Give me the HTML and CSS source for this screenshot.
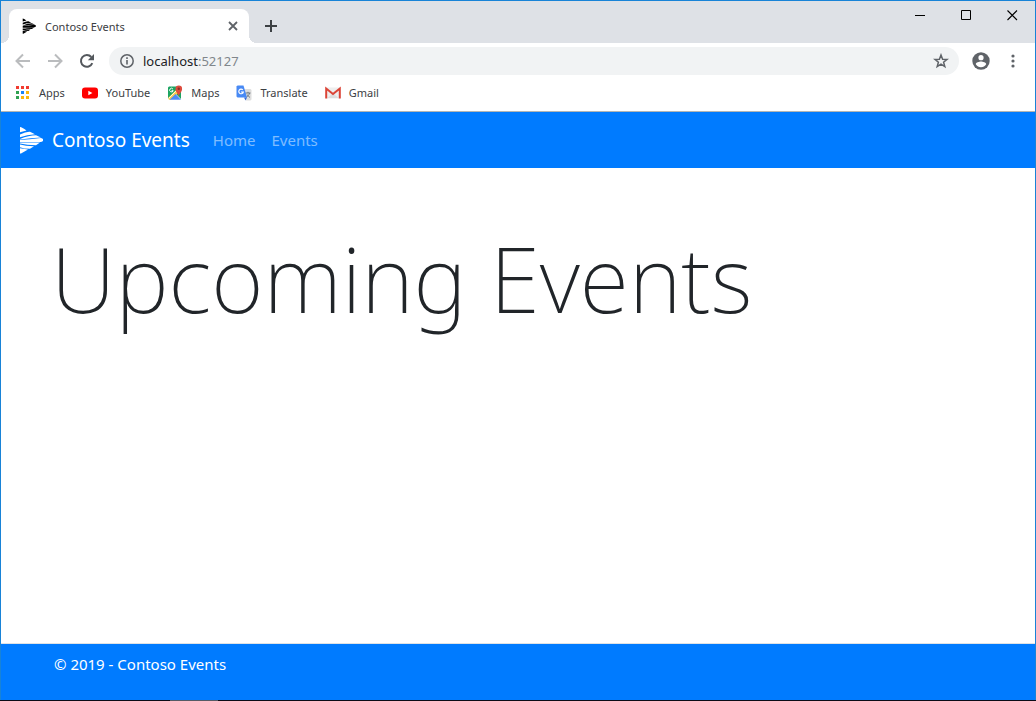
FILE: index.html
```html
<!DOCTYPE html>
<html lang="en">
<head>
<meta charset="utf-8">
<title>Contoso Events</title>
<link rel="stylesheet" href="styles.css">
</head>
<body>
<svg class="sprite" width="0" height="0" aria-hidden="true">
  <symbol id="logo" viewBox="0 0 24 28">
    <path d="M1 1Q3 1 7.500 4.500L1 6.200Z M1 8.500Q7 5.500 11 5.800L16 8.300Q8 8.800 1 11.200Z M1 13Q10 9.300 17 9.300L22 11.500Q12 12 1 13.500Z M1 14Q10 13.500 22 12Q27 14 22 16L1 16.500Z M1 17L21 16.500L17 19.200Q8 19.200 1 17.600Z M1 18.500Q7 20.300 15 20.200L11 22.800Q5 22.800 1 21.200Z M1 22.300L9 23.500L2 27.500H1Z"/>
  </symbol>
</svg>
<div class="window">
  <header class="tabstrip">
    <div class="tab">
      <svg class="tab-logo" width="14" height="16"><use href="#logo"/></svg>
      <span class="tab-title">Contoso Events</span>
      <button class="icon-btn" aria-label="Close tab"><svg width="10" height="10" viewBox="0 0 10 10"><path d="M1 1l8 8M9 1L1 9" stroke="#5f6368" stroke-width="1.800"/></svg></button>
    </div>
    <button class="icon-btn new-tab" aria-label="New tab"><svg width="12" height="12" viewBox="0 0 12 12"><path d="M6 0v12M0 6h12" stroke="#3c4043" stroke-width="2"/></svg></button>
    <div class="window-controls">
      <button class="icon-btn" aria-label="Minimize"><svg width="11" height="11"><path d="M0 5.500h10" stroke="#000"/></svg></button>
      <button class="icon-btn" aria-label="Maximize"><svg width="11" height="11"><path d="M.5.500h9v9h-9z" fill="none" stroke="#000"/></svg></button>
      <button class="icon-btn" aria-label="Close"><svg width="11" height="11"><path d="M.5.500l9.500 9.500M10 .5L.5 10" stroke="#000" stroke-width="1.100"/></svg></button>
    </div>
  </header>
  <div class="toolbar">
    <button class="icon-btn" aria-label="Back"><svg width="16" height="16" viewBox="0 0 16 16"><path d="M15 8H2M8 1.500L1.500 8 8 14.500" fill="none" stroke="#babcbe" stroke-width="2"/></svg></button>
    <button class="icon-btn" aria-label="Forward"><svg width="16" height="16" viewBox="0 0 16 16"><path d="M1 8h13M8 1.500L14.500 8 8 14.500" fill="none" stroke="#babcbe" stroke-width="2"/></svg></button>
    <button class="icon-btn" aria-label="Reload"><svg width="16" height="16" viewBox="0 0 16 16"><path d="M13.300 10.200A5.900 5.900 0 1 1 12.300 4" fill="none" stroke="#54585d" stroke-width="2"/><path d="M15 1v6.200H8.800z" fill="#54585d"/></svg></button>
    <div class="address">
      <svg width="14" height="14" viewBox="0 0 14 14"><circle cx="7" cy="7" r="6.200" fill="none" stroke="#5f6368" stroke-width="1.500"/><path d="M7 6v4.500M7 3.300v1.600" stroke="#5f6368" stroke-width="1.600"/></svg>
      <a class="url" href="#">localhost<span class="port">:52127</span></a>
      <button class="icon-btn" aria-label="Bookmark this page"><svg width="16" height="16" viewBox="0 0 16 16"><path d="M8 2l1.600 4.200 4.500.2-3.500 2.800 1.200 4.400L8 11.100l-3.800 2.500 1.200-4.400L1.900 6.400l4.500-.2z" fill="none" stroke="#5f6368" stroke-width="1.500"/></svg></button>
    </div>
    <button class="icon-btn" aria-label="Profile"><svg width="18" height="18" viewBox="0 0 18 18"><circle cx="9" cy="9" r="8.700" fill="#5f6368"/><circle cx="9" cy="5.700" r="2.600" fill="#fff"/><path d="M3.800 12.300c0-1.800 3.500-2.700 5.200-2.700s5.200.9 5.200 2.700C13 14.200 11.200 15.300 9 15.300s-4-1.100-5.200-3z" fill="#fff"/></svg></button>
    <button class="icon-btn menu" aria-label="Menu"><svg width="4" height="14" viewBox="0 0 4 14" fill="#5f6368"><circle cx="2" cy="2" r="1.600"/><circle cx="2" cy="7" r="1.600"/><circle cx="2" cy="12" r="1.600"/></svg></button>
  </div>
  <nav class="bookmarks" aria-label="Bookmarks">
    <a href="#"><svg width="16" height="16" viewBox="0 0 16 16"><path d="M1 1h3v3H1zM6 1h3v3H6zM11 1h3v3h-3z" fill="#f13b30"/><path d="M1 6h3v3H1zM1 11h3v3H1z" fill="#30a152"/><path d="M6 6h3v3H6z" fill="#1a83f7"/><path d="M11 6h3v3h-3zM6 11h3v3H6zM11 11h3v3h-3z" fill="#fbb50c"/></svg>Apps</a>
    <a href="#"><svg width="16" height="16" viewBox="0 0 16 16"><rect x="0" y="2.500" width="16" height="11" rx="3" fill="#f00"/><path d="M6.300 5.700v4.600L10.400 8z" fill="#fff"/></svg>YouTube</a>
    <a href="#"><svg width="16" height="16" viewBox="0 0 16 16"><path d="M2 1.500h8l4 4V14L9 9 1 14V2.500z" fill="#1da462"/><path d="M1 13L9 5l2.500 2.500L4 14.800H2z" fill="#ffd04b"/><path d="M2.500 14.800L8.500 9l5.500 5.800z" fill="#4c8bf5"/><path d="M1.500 13.500L10 5" stroke="#fff" stroke-width=".8"/><path d="M5.900 4a1.800 1.800 0 1 0 .3 1.700H4.600" fill="none" stroke="#fff"/><path d="M11.600 11.500c-.3-3-3.100-4.500-3.100-7.600a3.300 3.300 0 0 1 6.600 0c0 3.100-3.200 4.600-3.500 7.600z" fill="#dd4b3e"/><circle cx="11.800" cy="3.800" r="1.200" fill="#8c2f25"/></svg>Maps</a>
    <a href="#"><svg width="16" height="16" viewBox="0 0 16 16"><path d="M6 4h8.500l1 1v9.500l-1 1H10z" fill="#dedede"/><path d="M9.500 8h5M12 6.800V8M13.600 8c-.5 2-1.800 3.300-3.400 4.300M10.800 9.500l3.200 3" fill="none" stroke="#727a80"/><path d="M8 12.500h3L9.500 15.500z" fill="#3367d6"/><path d="M1.500.5h6L11 12.500H1.500l-1-1v-10z" fill="#4889f4"/><path d="M6.800 4.900A2.300 2.300 0 1 0 7.300 7H5" fill="none" stroke="#fff" stroke-width="1.200"/></svg>Translate</a>
    <a href="#"><svg width="16" height="16" viewBox="0 0 16 16"><rect x="1" y="2.500" width="14" height="11" rx="1" fill="#eee"/><path d="M2.500 13L8 8l5.500 5z" fill="#ddd"/><path d="M1.200 13.500V3.500L8 9l6.800-5.500v10" fill="none" stroke="#db4437" stroke-width="2"/></svg>Gmail</a>
  </nav>
  <nav class="navbar">
    <a class="brand" href="#"><svg width="24" height="28"><use href="#logo"/></svg>Contoso Events</a>
    <a class="nav-link" href="#">Home</a>
    <a class="nav-link" href="#">Events</a>
  </nav>
  <main>
    <h1>Upcoming Events</h1>
  </main>
  <footer>© 2019 - Contoso Events</footer>
</div>
<div class="taskbar"><span></span></div>
</body>
</html>
```

FILE: styles.css
```css
* { box-sizing: border-box; }
body {
  margin: 0;
  min-height: 100vh;
  display: flex;
  flex-direction: column;
  font-family: "Noto Sans", "Open Sans", sans-serif;
  color: #212529;
  background: #fff;
}
a { color: inherit; text-decoration: none; }
svg { display: block; flex: none; }
.sprite { position: absolute; }
.window {
  flex: 1;
  display: flex;
  flex-direction: column;
  border: 1px solid #1883d7;
  border-bottom: 0;
}
.icon-btn {
  display: flex;
  align-items: center;
  justify-content: center;
  flex: none;
  padding: 0;
  border: 0;
  background: none;
}
.tabstrip {
  display: flex;
  height: 42px;
  padding: 8px 0 0 8px;
  background: #dee1e6;
}
.tab {
  position: relative;
  display: flex;
  align-items: center;
  width: 240px;
  padding: 0 11px 0 13px;
  border-radius: 8px 8px 0 0;
  background: #fff;
  font-size: 11px;
  color: #3c4043;
}
.tab::before, .tab::after {
  content: "";
  position: absolute;
  bottom: 0;
  width: 8px;
  height: 8px;
}
.tab::before { left: -8px; background: radial-gradient(circle at 0 0, #dee1e6 8px, #fff 8px); }
.tab::after { right: -8px; background: radial-gradient(circle at 100% 0, #dee1e6 8px, #fff 8px); }
.tab-logo { fill: #000; margin-right: 9px; }
.tab-title { flex: 1; }
.new-tab { width: 12px; margin-left: 16px; }
.window-controls {
  display: flex;
  align-items: flex-start;
  gap: 35px;
  margin-left: auto;
  padding: 1px 17px 0 0;
}
.toolbar {
  display: flex;
  align-items: center;
  gap: 16px;
  height: 36px;
  padding: 0 20px 0 14px;
}
.address {
  flex: 1;
  display: flex;
  align-items: center;
  height: 28px;
  margin: 0 -3px 0 -2px;
  padding: 0 10px 0 11px;
  border-radius: 14px;
  background: #f1f3f4;
}
.menu { margin-left: 5px; }
.url { flex: 1; margin-left: 9px; font-size: 13px; color: #202124; }
.port { color: #80868b; }
.bookmarks {
  display: flex;
  align-items: center;
  gap: 17px;
  height: 33px;
  padding: 0 14px 5px;
  border-bottom: 1px solid #b3b5b3;
  font-size: 11px;
  color: #3c4043;
}
.bookmarks a { display: flex; align-items: center; gap: 8px; }
.navbar {
  display: flex;
  align-items: center;
  gap: 16px;
  height: 56px;
  padding: 0 18px;
  background: #007bff;
  color: #fff;
}
.brand { display: flex; align-items: center; gap: 9px; margin-right: 7px; font-size: 19px; }
.brand svg { fill: #fff; }
.nav-link { font-size: 15px; color: rgba(255, 255, 255, .5); }
main { flex: 1; padding: 44px 50px; }
h1 { margin: 0; font-size: 90px; line-height: 132px; font-weight: 250; }
footer {
  height: 57px;
  padding: 8px 53px;
  border-top: 1px solid #dee2e6;
  background: #007bff;
  color: #fff;
  font-size: 15px;
  line-height: 24px;
}
.taskbar { height: 1px; padding-left: 170px; background: #0b0b16; }
.taskbar span { display: block; width: 48px; height: 1px; background: #555b66; }
```
